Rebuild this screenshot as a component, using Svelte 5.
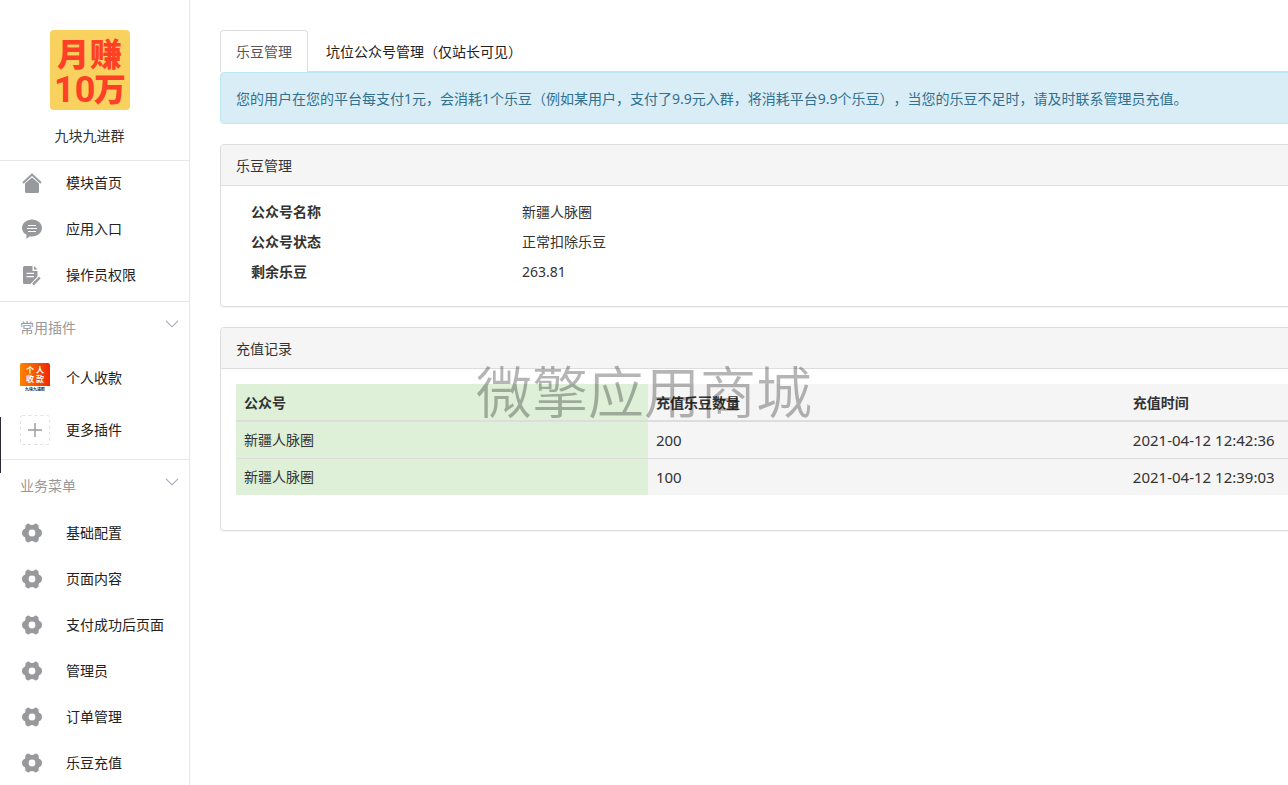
<script>
let baseMenu = [
  { title: "模块首页", icon: "home" },
  { title: "应用入口", icon: "chat" },
  { title: "操作员权限", icon: "doc" }
];
let bizMenu = ["基础配置", "页面内容", "支付成功后页面", "管理员", "订单管理", "乐豆充值"];

let account = [
  { label: "公众号名称", value: "新疆人脉圈" },
  { label: "公众号状态", value: "正常扣除乐豆" },
  { label: "剩余乐豆", value: "263.81" }
];
let records = [
  { name: "新疆人脉圈", count: 200, time: "2021-04-12 12:42:36" },
  { name: "新疆人脉圈", count: 100, time: "2021-04-12 12:39:03" }
];
</script>

{#snippet icon(name)}
  <svg class="icon" viewBox="0 0 20 20" aria-hidden="true">
    {#if name == "home"}
      <path d="M1 10 L10 1.6 L19 10" fill="none" stroke="#98999c" stroke-width="2" />
      <path d="M3 10.6 L10 4.4 L17 10.6 V18.5 Q17 20 15.5 20 H4.5 Q3 20 3 18.5 Z" fill="#98999c" />
    {:else if name == "chat"}
      <path d="M10 .5 C15.5 .5 20 4.2 20 9 C20 13.8 15.5 17.4 10 17.4 Q9 17.4 8 17.2 L4.4 19.8 V15.6 C1.8 14.2 0 12 0 9 C0 4.2 4.5 .5 10 .5 Z" fill="#98999c" />
      <path d="M6 6.5 H14 M5 9.5 H15 M6 12.5 H14" stroke="#fff" stroke-width="1" />
    {:else if name == "doc"}
      <path d="M2.5 1 H10.5 V6 H15.5 V11.5 L8.5 19 H2.5 Q1 19 1 17.5 V2.5 Q1 1 2.5 1 Z" fill="#98999c" />
      <path d="M12 1 L15.5 4.5 H12 Z" fill="#98999c" />
      <path d="M4.5 8.4 H12 M4.5 11.6 H12" stroke="#fff" stroke-width="1.3" />
      <path d="M17.8 12.5 L11 19.5" stroke="#98999c" stroke-width="2.4" />
    {:else}
      <path d="M5 .9 Q6.6 0 8 1.4 Q10 2.8 12 1.4 Q13.4 0 15 .9 Q17.2 2 16.6 4.2 Q16.6 6.2 18.5 6.6 Q20 7.2 20 10 Q20 12.8 18.5 13.4 Q16.6 13.8 16.6 15.8 Q17.2 18 15 19.1 Q13.4 20 12 18.6 Q10 17.2 8 18.6 Q6.6 20 5 19.1 Q2.8 18 3.4 15.8 Q3.4 13.8 1.5 13.4 Q0 12.8 0 10 Q0 7.2 1.5 6.6 Q3.4 6.2 3.4 4.2 Q2.8 2 5 .9 Z" fill="#98999c" />
      <circle cx="10" cy="10" r="3.4" fill="#fff" />
    {/if}
  </svg>
{/snippet}

{#snippet groupTitle(text)}
  <button class="group-title">
    <span>{text}</span>
    <svg class="arrow" viewBox="0 0 14 8" aria-hidden="true">
      <path d="M1 .8 L7 6.8 L13 .8" fill="none" stroke="#a0a8b4" stroke-width="1.1" />
    </svg>
  </button>
{/snippet}

<div class="page">
  <aside>
    <div class="module">
      <svg class="logo" viewBox="0 0 80 80">
        <rect width="80" height="80" rx="4" fill="#f9d15e" />
        <g class="logo-text">
          <text x="7" y="36">月</text>
          <text x="40" y="36">赚</text>
          <text class="logo-num" x="4" y="72">10</text>
          <text x="44" y="71">万</text>
        </g>
      </svg>
      <div class="module-name">九块九进群</div>
    </div>

    <nav class="group base">
      {#each baseMenu as item}
        <a class="item" href="#top">{@render icon(item.icon)}<span>{item.title}</span></a>
      {/each}
    </nav>

    <nav class="group plugins">
      {@render groupTitle("常用插件")}
      <a class="item" href="#top">
        <svg class="thumb" viewBox="0 0 30 30" aria-hidden="true">
          <defs>
            <linearGradient id="pay">
              <stop offset="0" stop-color="#fa8500" />
              <stop offset="1" stop-color="#f02800" />
            </linearGradient>
          </defs>
          <path d="M2 0 H28 Q30 0 30 2 V23 H0 V2 Q0 0 2 0 Z" fill="url(#pay)" />
          <g class="thumb-text">
            <text x="15" y="10" font-size="8">个 人</text>
            <text x="15" y="19" font-size="8">收 款</text>
            <text class="thumb-sub" x="15" y="28" font-size="4">九块九进群</text>
          </g>
        </svg>
        <span>个人收款</span>
      </a>
      <a class="item" href="#top">
        <svg class="thumb" viewBox="0 0 30 30" aria-hidden="true">
          <rect x=".5" y=".5" width="29" height="29" rx="2" fill="none" stroke="#e0e0e3" stroke-dasharray="3 3" />
          <path d="M15 8 V22 M8 15 H22" stroke="#98999c" stroke-width="1.4" />
        </svg>
        <span>更多插件</span>
      </a>
    </nav>

    <nav class="group">
      {@render groupTitle("业务菜单")}
      {#each bizMenu as title}
        <a class="item" href="#top">{@render icon("gear")}<span>{title}</span></a>
      {/each}
    </nav>
  </aside>

  <main>
    <div class="content">
      <nav class="tabs">
        <a class="active" href="#top">乐豆管理</a>
        <a href="#top">坑位公众号管理（仅站长可见）</a>
      </nav>
      <div class="alert">您的用户在您的平台每支付1元，会消耗1个乐豆（例如某用户，支付了9.9元入群，将消耗平台9.9个乐豆），当您的乐豆不足时，请及时联系管理员充值。</div>

      <section class="panel">
        <div class="panel-heading">乐豆管理</div>
        <dl class="panel-body account">
          {#each account as row}
            <div class="row">
              <dt>{row.label}</dt>
              <dd>{row.value}</dd>
            </div>
          {/each}
        </dl>
      </section>

      <section class="panel">
        <div class="panel-heading">充值记录</div>
        <div class="panel-body">
          <table>
            <thead>
              <tr><th class="name">公众号</th><th class="count">充值乐豆数量</th><th>充值时间</th></tr>
            </thead>
            <tbody>
              {#each records as record}
                <tr>
                  <td class="name">{record.name}</td>
                  <td class="num">{record.count}</td>
                  <td class="num">{record.time}</td>
                </tr>
              {/each}
            </tbody>
          </table>
        </div>
      </section>
    </div>
  </main>
</div>

<div class="handle"></div>
<div class="watermark">微擎应用商城</div>

<style>
:global(body) {
  margin: 0;
  background: #fff;
}
.page {
  display: flex;
  min-height: 100vh;
  overflow: hidden;
  font: 14px/20px "Noto Sans", "Noto Sans CJK SC", sans-serif;
  text-spacing-trim: space-all;
  color: #333;
}
a {
  color: #222;
  text-decoration: none;
}

/* sidebar */
aside {
  flex: 0 0 190px;
  box-sizing: border-box;
  border-right: 1px solid #e7e7eb;
  height: 100vh;
  overflow: hidden;
}
.module {
  display: flex;
  flex-direction: column;
  align-items: center;
  gap: 16px;
  padding: 30px 10px 14px 0;
  border-bottom: 1px solid #e7e7eb;
}
.logo {
  width: 80px;
  height: 80px;
}
.logo-text {
  font-family: "Noto Sans CJK SC", sans-serif;
  font-size: 32px;
  font-weight: 900;
  fill: #ff4026;
}
.logo-num {
  font-family: Roboto, sans-serif;
  font-size: 36px;
  font-weight: bold;
}
.group {
  padding-bottom: 2px;
  border-bottom: 1px solid #e7e7eb;
}
.group.base {
  margin-top: -1px;
  padding-bottom: 3px;
}
.group.plugins {
  padding-bottom: 3px;
}
.group-title {
  display: flex;
  justify-content: space-between;
  align-items: center;
  width: 100%;
  height: 50px;
  padding: 2px 10px 0 20px;
  border: 0;
  background: none;
  font: inherit;
  color: #999;
}
.arrow {
  width: 14px;
  height: 8px;
  margin-bottom: 8px;
}
.item {
  display: flex;
  align-items: center;
  gap: 24px;
  height: 46px;
  padding-left: 22px;
}
.icon {
  width: 20px;
  height: 20px;
}
.plugins .item {
  gap: 16px;
  height: 52px;
  padding-left: 20px;
}
.thumb {
  width: 30px;
  height: 30px;
}
.thumb-text {
  font-family: "Noto Sans CJK SC", sans-serif;
  font-weight: bold;
  text-anchor: middle;
  fill: #fff;
}
.thumb-sub {
  fill: #222;
}

/* content */
main {
  flex: 1;
  min-width: 0;
  padding: 30px 0 30px 30px;
}
.content {
  margin-right: -48px;
}
.tabs {
  display: flex;
  gap: 2px;
  border-bottom: 1px solid #ddd;
}
.tabs a {
  padding: 11px 15px 9px;
  border: 1px solid transparent;
  border-bottom: 0;
  border-radius: 4px 4px 0 0;
}
.tabs .active {
  margin-bottom: -1px;
  border-color: #ddd;
  background: #fff;
  color: #555;
}
.alert {
  margin-bottom: 20px;
  padding: 16px 15px 14px;
  border: 1px solid #bce8f1;
  border-radius: 4px;
  background: #d9edf7;
  color: #31708f;
}
.panel {
  margin-bottom: 20px;
  border: 1px solid #ddd;
  border-radius: 4px;
  box-shadow: 0 1px 1px rgba(0, 0, 0, 0.05);
}
.panel-heading {
  padding: 11px 15px 9px;
  border-bottom: 1px solid #ddd;
  border-radius: 3px 3px 0 0;
  background: #f5f5f5;
}
.panel-body {
  padding: 15px;
}
.account {
  margin: 0;
  padding: 16px 15px 14px;
}
.row {
  display: flex;
  margin-bottom: 10px;
}
dt {
  box-sizing: border-box;
  width: 25%;
  padding: 0 15px;
  font-weight: bold;
}
dd {
  margin: 0;
  padding: 0 15px;
}
table {
  width: 100%;
  margin-bottom: 20px;
  border-spacing: 0;
  table-layout: fixed;
  background: #f5f5f5;
}
th,
td {
  padding: 8px;
  text-align: left;
}
th {
  padding: 9px 8px 7px;
  border-bottom: 2px solid #ddd;
}
tr + tr td {
  border-top: 1px solid #ddd;
}
.name {
  width: 38%;
  box-sizing: border-box;
  background: #dff0d8;
}
.count {
  width: 44%;
  box-sizing: border-box;
}
.num {
  font-size: 15px;
}

.handle {
  position: fixed;
  top: 417px;
  left: 0;
  width: 1px;
  height: 56px;
  background: #2b2b38;
}
.watermark {
  position: fixed;
  inset: 0;
  display: flex;
  align-items: center;
  justify-content: center;
  padding-bottom: 8px;
  font: 350 56px/80px "Noto Sans CJK SC", sans-serif;
  color: rgba(0, 0, 0, 0.29);
  pointer-events: none;
}
</style>
